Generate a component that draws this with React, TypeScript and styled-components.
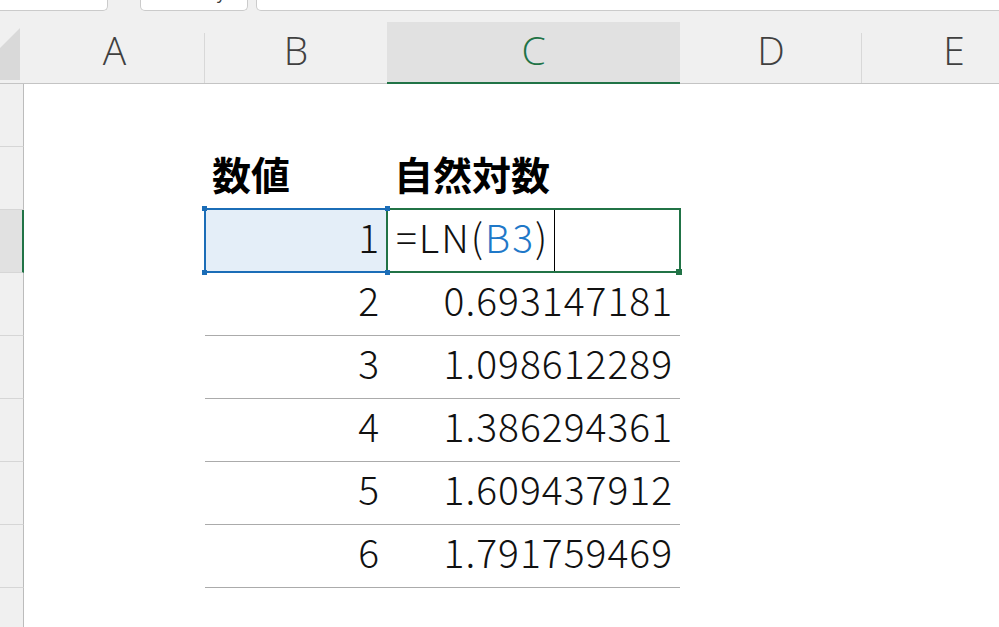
import React from "react";
import styled, { createGlobalStyle, css } from "styled-components";

const Global = createGlobalStyle`
  html, body { margin: 0; padding: 0; background: #f0f0f0; overflow: hidden; }
  #root { width: 999px; height: 627px; overflow: hidden; }
`;

const Sheet = styled.div`
  width: 999px;
  height: 627px;
  overflow: hidden;
  background: #f0f0f0;
  display: flex;
  flex-direction: column;
  font-family: "Noto Sans CJK JP", "Noto Sans", sans-serif;
`;

const TopBar = styled.div`
  height: 11px;
  flex-shrink: 0;
  display: flex;
`;

const BarBox = styled.div<{ $w: number; $ml: number; $grow?: boolean }>`
  width: ${(p) => p.$w}px;
  margin-left: ${(p) => p.$ml}px;
  flex: ${(p) => (p.$grow ? "1 0 auto" : "0 0 auto")};
  height: 11px;
  box-sizing: border-box;
  background: #ffffff;
  border: 1px solid #cbcbcb;
  border-top: none;
  border-radius: 0 0 5px 5px;
  overflow: hidden;
  display: flex;
`;

const Peek = styled.span<{ $pl: number }>`
  display: block;
  margin-top: -15px;
  padding-left: ${(p) => p.$pl}px;
  font-family: "Noto Sans", sans-serif;
  font-size: 16px;
  line-height: 16px;
  color: #3a3a3a;
  white-space: nowrap;
`;

const Grid = styled.div`
  margin-top: 11px;
  display: grid;
  grid-template-columns: 24px 181px 182px 293px 182px 184px;
  grid-template-rows: 62px;
  grid-auto-rows: 63px;
`;

const Corner = styled.div`
  background: #f0f0f0;
  border-bottom: 1px solid #c4c4c4;
  display: flex;
  align-items: flex-start;
`;

const ColHead = styled.div<{ $active?: boolean; $sep?: boolean }>`
  box-sizing: border-box;
  display: flex;
  align-items: center;
  justify-content: center;
  padding-bottom: 6px;
  font-family: "Open Sans", "Noto Sans", sans-serif;
  font-size: 39px;
  font-weight: 300;
  line-height: 1;
  color: #404040;
  background-color: #f0f0f0;
  border-bottom: 1px solid #c4c4c4;
  ${(p) =>
    p.$sep &&
    css`
      background-image: linear-gradient(#d8d8d8, #d8d8d8);
      background-size: 1px calc(100% - 11px);
      background-position: right bottom;
      background-repeat: no-repeat;
    `}
  ${(p) =>
    p.$active &&
    css`
      background-color: #e1e1e1;
      color: #217346;
      border-bottom: 2px solid #217346;
      padding-bottom: 5px;
    `}
`;

const RowHead = styled.div<{ $active?: boolean }>`
  box-sizing: border-box;
  background: #f0f0f0;
  border-right: 1px solid #bcbcbc;
  border-bottom: 1px solid #d6d6d6;
  ${(p) =>
    p.$active &&
    css`
      background: #e1e1e1;
      border-right: 2px solid #217346;
    `}
`;

const Cell = styled.div<{
  $align?: "left" | "right";
  $line?: boolean;
  $bold?: boolean;
  $selected?: boolean;
  $editing?: boolean;
}>`
  position: relative;
  box-sizing: border-box;
  background: ${(p) => (p.$selected ? "#e4eef8" : "#ffffff")};
  display: flex;
  align-items: flex-end;
  justify-content: ${(p) => (p.$align === "right" ? "flex-end" : "flex-start")};
  padding: 0 ${(p) => (p.$align === "right" ? 7 : 7)}px 16px;
  border-bottom: 1px solid ${(p) => (p.$line ? "#ababab" : "transparent")};
  font-size: 39px;
  line-height: 1;
  color: #111111;
  font-weight: 300;
  letter-spacing: 1px;
  white-space: nowrap;
  ${(p) =>
    p.$bold &&
    css`
      color: #000000;
      font-weight: 700;
      letter-spacing: 0;
    `}
  ${(p) =>
    p.$editing &&
    css`
      align-items: stretch;
      padding-bottom: 0;
      padding-left: 9px;
    `}
`;

const EditText = styled.span`
  display: flex;
  align-items: flex-end;
  padding: 0 5px 16px 0;
  letter-spacing: 2px;
  border-right: 1px solid #000000;
`;

const Ref = styled.span`
  color: #1f78c8;
`;

const Frame = styled.div<{ $color: string }>`
  position: absolute;
  top: -2px;
  left: -1px;
  right: -1px;
  bottom: -1px;
  border: 2px solid ${(p) => p.$color};
  pointer-events: none;
  z-index: 2;
`;

const Handle = styled.span<{
  $color: string;
  $size: number;
  $v: "top" | "bottom";
  $h: "left" | "right";
  $dv: number;
  $dh: number;
}>`
  position: absolute;
  width: ${(p) => p.$size}px;
  height: ${(p) => p.$size}px;
  background: ${(p) => p.$color};
  ${(p) => p.$v}: ${(p) => p.$dv}px;
  ${(p) => p.$h}: ${(p) => p.$dh}px;
  z-index: 3;
`;

const BLUE = "#1b6db7";
const GREEN = "#217346";

const columns = ["A", "B", "C", "D", "E"];

const values = [
  { n: "2", v: "0.693147181" },
  { n: "3", v: "1.098612289" },
  { n: "4", v: "1.386294361" },
  { n: "5", v: "1.609437912" },
  { n: "6", v: "1.791759469" },
];

const Blank = () => <Cell />;

export default function App() {
  return (
    <>
      <Global />
      <Sheet>
        <TopBar>
          <BarBox $w={112} $ml={-4}>
            <Peek $pl={4}>W</Peek>
          </BarBox>
          <BarBox $w={108} $ml={32}>
            <Peek $pl={76}>y</Peek>
          </BarBox>
          <BarBox $w={760} $ml={8} $grow />
        </TopBar>
        <Grid>
          <Corner>
            <svg width="24" height="61" viewBox="0 0 24 61">
              <polygon points="20,6 20,58 0,58 0,26" fill="#d9d9d9" />
            </svg>
          </Corner>
          {columns.map((c) => (
            <ColHead key={c} $active={c === "C"} $sep={c === "A" || c === "D"}>
              {c}
            </ColHead>
          ))}

          {/* row 1 */}
          <RowHead />
          <Blank />
          <Blank />
          <Blank />
          <Blank />
          <Blank />

          {/* row 2 */}
          <RowHead />
          <Blank />
          <Cell $bold $line>
            数値
          </Cell>
          <Cell $bold $line>
            自然対数
          </Cell>
          <Blank />
          <Blank />

          {/* row 3 */}
          <RowHead $active />
          <Blank />
          <Cell $align="right" $line $selected>
            1
            <Frame $color={BLUE} />
            <Handle $color={BLUE} $size={5} $v="top" $h="left" $dv={-4} $dh={-3} />
            <Handle $color={BLUE} $size={5} $v="bottom" $h="left" $dv={-3} $dh={-3} />
            <Handle $color={BLUE} $size={5} $v="top" $h="right" $dv={-4} $dh={-3} />
            <Handle $color={BLUE} $size={5} $v="bottom" $h="right" $dv={-3} $dh={-3} />
          </Cell>
          <Cell $line $editing>
            <EditText>
              =LN(<Ref>B3</Ref>)
            </EditText>
            <Frame $color={GREEN} />
            <Handle $color={GREEN} $size={6} $v="bottom" $h="right" $dv={-3} $dh={-2} />
          </Cell>
          <Blank />
          <Blank />

          {values.map((r) => (
            <React.Fragment key={r.n}>
              <RowHead />
              <Blank />
              <Cell $align="right" $line>
                {r.n}
              </Cell>
              <Cell $align="right" $line>
                {r.v}
              </Cell>
              <Blank />
              <Blank />
            </React.Fragment>
          ))}

          {/* row 9 */}
          <RowHead />
          <Blank />
          <Blank />
          <Blank />
          <Blank />
          <Blank />
        </Grid>
      </Sheet>
    </>
  );
}
